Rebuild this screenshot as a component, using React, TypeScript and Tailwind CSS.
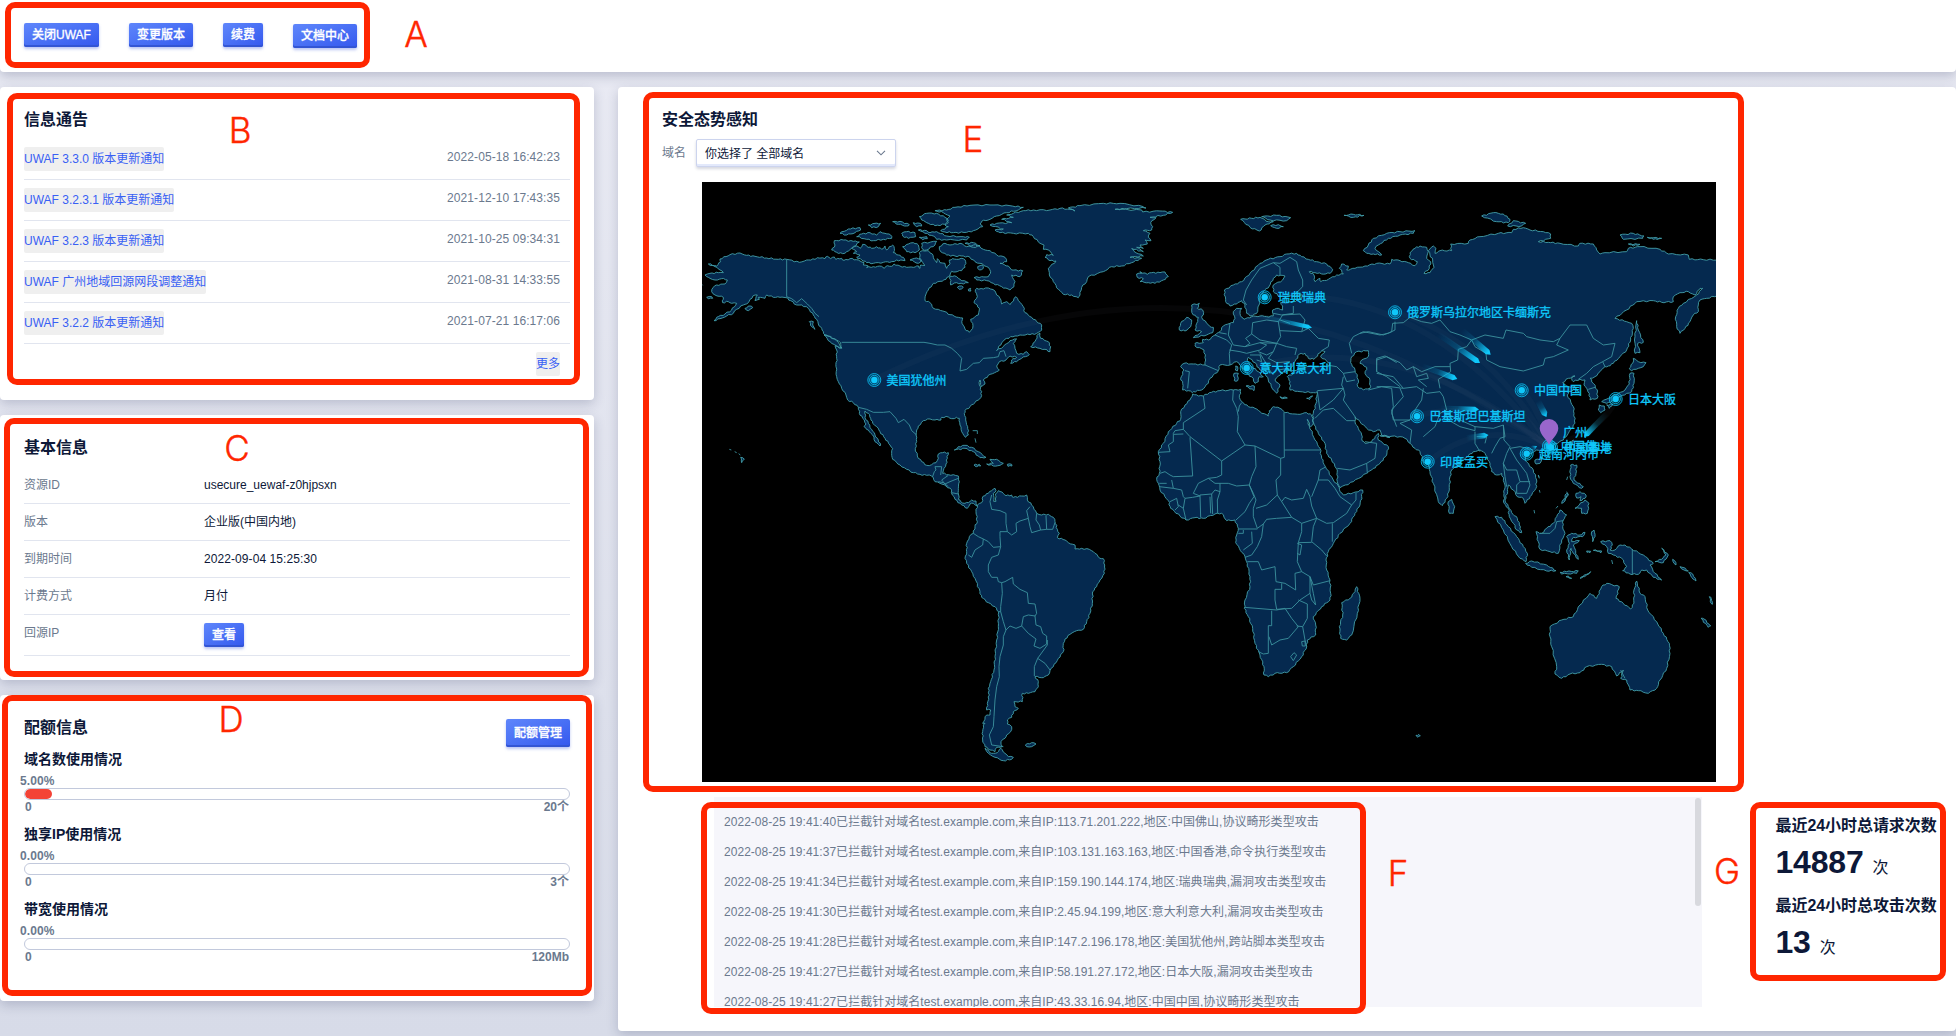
import React from "react";

/* ------------------------------------------------------------------ */
/* World map geometry: one unit is a third of a pixel. Each tile has    */
/* its own origin so that point lists stay short.                       */
/* ------------------------------------------------------------------ */

type Pt = [number, number];
type Tile = "A" | "S" | "E" | "R" | "F" | "O";

const ORIGIN: Record<Tile, Pt> = {
  A: [0, 0],
  S: [660, 780],
  E: [1080, 0],
  R: [1980, 0],
  F: [1260, 600],
  O: [2040, 570],
};

const parse = (tile: Tile, pts: string): Pt[] =>
  pts
    .trim()
    .split(/\s+/)
    .map((p) => {
      const [x, y] = p.split(",").map(Number);
      return [x + ORIGIN[tile][0], y + ORIGIN[tile][1]] as Pt;
    });

const coast = (pts: Pt[]): string => {
  const out: Pt[] = [];
  pts.forEach((p, i) => {
    const q = pts[(i + 1) % pts.length];
    out.push(p);
    const dx = q[0] - p[0];
    const dy = q[1] - p[1];
    const len = Math.hypot(dx, dy);
    const n = Math.min(4, Math.floor(len / 8));
    if (len > 90) return;
    for (let k = 1; k <= n; k++) {
      const t = k / (n + 1);
      const w = Math.sin(p[0] * 12.9 + p[1] * 7.3 + k * 41.7) * 2;
      out.push([p[0] + dx * t - (dy / len) * w, p[1] + dy * t + (dx / len) * w]);
    }
  });
  return "M" + out.map((p) => p[0].toFixed(1) + " " + p[1].toFixed(1)).join("L") + "Z";
};

const line = (pts: Pt[]): string => "M" + pts.map((p) => p.join(" ")).join("L");

const LAND: [Tile, string][][] = [
  // North and Central America
  [
    ["A", "25,252 50,258 62,245 60,237 90,224 120,219 140,226 165,229 200,234 235,238 260,238 298,247 320,240 345,238 352,233 375,236 382,229 392,236 403,231 408,238 425,235 432,241 450,236 475,240 480,243 492,248 490,255 505,258 500,263 520,260 545,259 553,265 562,257 575,259 582,252 600,258 620,262 640,262 656,258 660,265 662,255 675,256 668,247 660,240 658,218 668,212 685,212 697,222 700,232 710,248 712,236 720,248 735,250 740,265 750,250 748,240 757,236 770,238 790,236 797,245 795,262 785,272 765,276 755,274 750,285 738,298 720,304 700,310 685,330 677,345 675,362 690,368 700,385 715,388 735,395 750,404 775,412 788,414 786,430 795,447 808,457 818,445 818,430 812,418 835,405 838,390 832,375 822,368 832,350 826,335 830,325 850,327 865,324 885,333 890,345 900,355 905,372 920,365 930,374 948,350 955,362 970,380 975,398 995,412 1010,425 1025,435 1025,450 1010,460 990,464 960,465 945,468 920,475 905,488 890,512 910,500 930,482 950,477 945,485 940,490 945,505 950,520 970,523 980,515 988,524 965,535 950,545 932,550 935,540 950,532 930,528 918,540 898,545 890,558 898,570 890,575 870,583 862,592 850,600 855,612 845,620 840,600 838,615 845,635 843,652 825,668 810,680 795,692 793,700 797,720 803,740 805,765 797,772 785,755 780,735 778,715 770,712 755,716 745,711 725,712 723,720 705,720 690,717 670,722 655,738 650,750 648,765 650,785 646,805 652,828 665,845 680,856 695,854 708,848 715,835 715,822 728,818 745,818 742,835 738,852 732,865 728,880 745,884 760,884 775,888 778,905 775,925 776,945 775,958 782,965 795,970 805,968 815,960 828,963"],
    ["S", "170,198 160,190 150,192 142,205 125,195 105,178 97,165 95,150 78,138 60,130 45,125 35,108 20,106 0,103"],
    ["A", "640,878 620,868 600,855 578,838 575,820 578,805 570,795 555,775 540,755 530,740 518,730 512,715 505,700 495,693 495,712 505,730 515,748 525,765 535,780 542,795 540,798 525,785 518,765 505,750 492,740 498,732 488,715 478,700 475,682 460,668 443,660 438,645 425,625 415,605 410,590 408,560 410,535 410,510 405,497 425,505 422,488 410,480 375,465 370,455 365,445 355,432 350,418 340,405 325,385 305,375 290,375 272,362 258,353 240,352 220,352 200,345 195,355 175,352 178,358 165,362 172,345 165,345 150,358 145,368 130,375 110,388 100,400 80,408 60,416 42,422 50,412 75,402 95,390 110,370 95,370 85,365 68,368 70,352 45,345 35,335 40,322 50,315 75,312 82,300 65,296 45,300 30,295 15,285 30,280 55,278 70,278 60,270 45,260"],
  ],
  // Canadian Arctic
  [["A", "403,182 430,180 460,184 478,186 455,205 440,215 428,221 410,217 395,210 405,195"]],
  [["A", "455,205 470,198 480,205 488,193 500,198 515,205 530,200 545,208 555,198 560,210 568,200 578,195 583,205 580,218 595,225 610,232 615,242 590,240 575,245 550,247 520,250 500,248 485,240 470,232 480,225 460,220 470,215"]],
  [["A", "420,160 445,147 480,143 482,150 465,158 440,165"]],
  [["A", "470,170 485,162 510,158 530,165 540,155 555,160 572,165 575,175 550,178 520,182 500,178"]],
  [["A", "505,135 525,130 542,130 535,140 515,143"]],
  [["A", "578,125 600,124 628,134 620,138 595,133"]],
  [["A", "640,128 660,130 665,138 650,140"]],
  [["A", "605,160 620,155 645,158 647,170 625,175 608,168"]],
  [["A", "658,172 680,170 682,176 668,179"]],
  [["A", "608,200 625,192 640,188 655,195 658,210 645,218 620,215"]],
  [["A", "665,190 710,184 705,195 680,210 668,208"]],
  [["A", "630,240 650,234 665,240 655,250"]],
  [["A", "655,150 680,152 690,158 710,155 740,168 790,170 808,172 800,180 740,180 710,178 700,168 675,160"]],
  [["A", "705,92 740,90 765,82 810,76 870,75 930,77 970,82 955,90 920,98 890,108 870,118 845,124 840,132 848,140 820,152 800,157 760,158 735,156 722,152 745,140 735,135 745,128 740,118 750,108 730,98"]],
  [["A", "658,110 680,100 710,100 735,112 745,122 735,133 705,137 680,128 665,120"]],
  [["A", "718,200 735,190 750,195 780,190 800,200 820,195 838,198 850,208 870,212 890,225 915,232 920,245 900,250 925,258 935,270 968,272 960,290 935,285 945,305 942,320 930,330 905,320 880,310 860,302 830,300 822,293 845,290 865,290 872,275 865,262 840,250 825,245 810,232 790,228 765,228 740,225 722,215"]],
  [["A", "795,190 820,188 840,197 820,202"]],
  [["A", "750,288 770,290 780,298 805,308 790,312 770,308 752,315"]],
  [["A", "833,260 848,255 850,265 838,270"]],
  [["A", "772,322 785,318 790,322 778,328"]],
  [["A", "805,328 812,325 813,333 806,333"]],
  [["A", "992,500 1005,485 1015,462 1020,460 1022,475 1045,485 1052,500 1050,515 1035,508 1020,505"]],
  [["A", "372,465 385,468 405,478 415,487 425,503 410,498 390,485"]],
  [["A", "328,425 340,425 338,435 345,448 335,440"]],
  [["A", "135,385 150,378 158,383 145,392"]],
  [["A", "20,352 35,350 38,355 25,356"]],
  // Greenland and Iceland
  [
    ["A", "870,135 890,130 935,128 905,118 940,112 920,105 940,100 970,92 1000,90 1050,90 1080,85 1110,88 1125,93"],
    ["E", "25,84 60,77 130,70 180,70 250,80 258,84 200,86 165,88 245,90 248,96 300,93 338,97 310,106 270,112 288,113 272,128 278,140 275,150 250,152 270,160 265,172 273,182 255,180 262,192 240,195 250,205 230,202 250,215 215,206 222,214 250,228 210,232 245,235 215,248 185,258 155,260 130,275 85,290 80,305 65,322 60,345 55,353 35,345 10,343 0,332"],
    ["A", "1075,328 1060,305 1048,285 1045,265 1068,243 1050,242 1035,232 1040,224 1060,226 1045,210 1030,208 1032,195 1020,190 1000,170 985,160 940,160 900,158 885,150 910,147"],
  ],
  [["E", "230,282 245,280 240,275 262,283 275,278 300,278 315,276 325,290 310,300 285,310 265,308 240,305 250,296 232,292"]],
  // Caribbean and Pacific islands
  [["A", "763,810 775,800 795,796 815,802 835,815 858,832 840,833 820,815 795,805"]],
  [["A", "860,852 880,850 870,838 890,838 910,850 900,856 880,858"]],
  [["A", "822,855 838,853 842,858 830,860"]],
  [["A", "922,853 935,853 936,858 924,859"]],
  [["A", "122,832 133,838 125,848"]],
  // South America
  [["S", "172,195 185,188 190,168 205,160 215,152 225,145 228,152 220,160 222,172 221,184 228,184 228,170 226,162 235,152 250,160 258,167 275,165 280,172 305,168 320,165 322,180 340,200 350,220 365,225 385,223 400,232 405,245 412,268 418,280 412,293 435,300 445,308 465,315 465,327 485,325 508,328 525,340 540,355 550,356 554,375 553,400 540,420 530,440 518,455 517,490 510,520 500,545 490,568 470,572 450,583 435,597 430,610 430,635 415,655 400,680 390,692 385,705 370,713 345,710 355,725 355,740 345,755 325,760 307,760 307,785 282,785 285,800 295,805 280,815 275,832 262,840 262,852 275,860 272,875 260,885 255,895 243,905 247,920 230,922 225,935 210,930 195,920 188,900 188,875 190,855 195,850 188,850 200,825 210,825 212,810 200,810 202,790 208,765 205,745 212,725 222,690 225,650 230,600 235,560 236,515 225,500 205,488 185,472 180,455 165,415 155,395 140,370 135,355 140,335 140,310 148,290 160,280 165,260 172,245 168,215"]],
  [["S", "195,925 215,940 232,938 243,925 255,940 265,950 280,952 275,958 250,962 225,952 205,940"]],
  [["S", "316,915 335,908 348,912 335,920 320,920"]],
  // Africa
  [["F", "218,42 235,48 250,48 268,38 300,32 340,30 362,28 362,40 358,52 365,65 385,80 405,85 420,95 445,108 448,92 460,80 480,85 495,98 525,102 540,103 560,98 575,105 580,115 578,135 572,140 562,118 568,138 585,180 600,205 605,235 615,258 640,300 655,318 660,335 670,345 700,338 728,330 725,350 720,375 705,400 690,430 660,460 640,490 625,515 618,540 620,570 630,600 632,640 630,660 605,680 580,710 587,735 587,765 562,780 560,800 545,830 520,860 500,878 465,880 445,890 432,885 432,860 420,825 405,790 398,745 385,710 373,685 375,660 390,620 390,590 382,550 375,530 358,505 347,488 350,465 355,445 345,420 320,422 305,400 285,402 250,415 225,413 198,420 180,408 152,385 145,362 120,330 115,310 110,298 118,280 120,245 115,215 130,190 145,155 170,130 182,118 182,95 195,75 210,60"]],
  [["F", "710,620 720,655 712,700 695,765 680,780 662,775 658,740 668,705 665,668 690,655 705,635"]],
  // Europe and Asia
  [
    ["E", "397,638 385,632 368,630 368,610 362,595 372,570 362,560 372,550 400,552 435,555 437,540 432,510 405,498 405,490 430,488 428,478 445,480 465,465 480,455 490,438 510,430 520,428 525,415 520,395 530,385 545,385 540,400 545,412 552,418 575,410 600,408 620,410 640,408 638,390 655,385 668,390 668,378 662,368 700,365 725,355 728,345 700,348 660,350 640,335 640,315 668,300 675,288 650,285 640,295 628,318 610,335 600,350 597,375 590,400 570,408 560,400 555,375 545,362 530,372 510,378 497,365 493,330 520,315 545,305 570,280 600,250 625,238 660,230 680,222 710,220 725,230 745,238 770,245 800,252 818,268 810,280 785,282 765,278 748,275 762,285 765,305 780,295 782,305 805,298 830,285 850,282 845,270 838,265 845,252 865,258 860,270 885,265 915,258 950,250 990,252 995,238"],
    ["R", "120,242 145,248 165,257 172,245 150,235 150,218 165,205 180,198 200,202 205,215 200,235 212,245 208,265 192,280 210,278 222,262 218,240 210,225 205,212 220,198 228,205 225,220 240,212 275,212 272,192 325,190 330,180 360,170 415,160 455,158 460,148 490,143 510,150 550,155 572,162 572,175 535,185 565,187 600,190 655,198 660,190 700,192 710,210 720,222 735,218 800,215 805,205 840,200 900,208 925,222 985,225 988,238 1030,239 1080,240 1080,345 1040,355 1020,360 1015,375 1015,395 1000,405 990,425 975,445 960,460 950,440 947,410 955,385 970,370 1010,345 1028,325 1020,325 1005,345 985,335 960,338 940,350 940,365 905,367 880,362 830,365 800,390 765,415 800,425 815,430 820,445 812,480 800,510 780,530 760,550 745,558 735,560 720,575 705,590 690,595 700,610 712,630 712,655 690,660 688,640 680,625 672,615 675,600 660,598 640,605 635,595 645,588 625,595 608,608 625,620 645,618 640,630 625,635 622,645 640,680 642,700 645,730 625,760 610,780 580,795 555,805 540,815 530,810 518,818 500,822 495,840 520,870 530,900 528,925 515,945 495,970"],
    ["O", "430,385 412,380 400,360 385,345 383,365 375,390 385,410 395,428 412,445 418,465 425,488 410,480 400,460 388,440 385,415 372,400 372,370 375,345 365,310 350,315 335,305 330,280 315,250 300,240 280,245 255,265 235,285 215,300 210,320 208,360 200,385 187,407 175,395 160,340 150,305 145,285 130,275 120,245 105,235 90,220 75,205 60,200 20,198 0,197"],
    ["E", "990,772 965,765 960,750 940,755 920,745 900,725 885,710 885,725 895,745 905,765 906,782 915,790 935,785 950,765 955,760 955,780 985,800 980,825 960,850 935,870 920,880 880,905 840,923 832,905 832,870 815,840 800,820 795,790 775,760 763,735 758,725 760,700 768,670 770,650 772,635 760,638 720,635 690,630 690,605 682,590 700,580 690,572 665,578 645,600 660,615 650,640 640,630 625,600 615,580 600,570 585,548 565,532 562,542 575,560 595,575 610,590 598,590 595,605 585,610 580,595 560,580 545,560 530,545 510,555 480,555 475,572 450,595 445,610 425,630 400,635"],
  ],
  // British Isles and Mediterranean islands
  [["E", "395,375 418,370 412,385 428,390 430,405 425,412 440,430 450,440 460,442 458,458 440,465 400,473 425,455 405,450 410,430 415,412 400,405 395,390"]],
  [["E", "362,430 380,412 395,420 392,440 375,453 358,450"]],
  [["E", "558,618 583,618 582,632"]],
  [["E", "522,580 535,580 533,602 523,602"]],
  [["E", "527,558 533,560 532,573 526,570"]],
  [["E", "660,650 682,654 668,656"]],
  [["E", "740,655 758,648 748,659"]],
  // Russian Arctic
  [["E", "542,118 575,115 600,112 625,125 640,125 615,135 598,153 570,142"]],
  [["E", "605,110 650,106 692,113 680,122 630,120"]],
  [["E", "632,137 655,134 670,140 650,145"]],
  [["E", "852,106 880,103 912,106 880,112"]],
  [["R", "10,212 25,195 40,175 80,160 120,155 165,152 160,160 120,165 85,175 55,195 45,205 65,225 40,222 20,220"]],
  [["R", "365,108 400,98 430,102 450,118 445,128 410,125"]],
  [["R", "460,122 497,130 485,138 443,138"]],
  [["R", "780,165 820,160 852,168 848,175 790,178"]],
  [["R", "862,172 905,175 880,178"]],
  [["R", "805,192 840,193 820,198"]],
  // East Asian islands
  [["R", "830,422 835,450 850,487 833,490 840,518 825,520 825,470"]],
  [["R", "820,535 835,545 858,548 850,560 835,565 815,572 808,565 818,550"]],
  [["R", "810,580 822,580 822,610 815,635 800,640 780,650 765,660 740,670 725,665 745,655 775,640 795,630 808,612"]],
  [["R", "718,675 733,678 735,690 722,698 715,690"]],
  [["R", "740,675 758,672 748,685"]],
  [["R", "625,790 640,780 632,805"]],
  [["R", "525,840 545,835 540,850 528,852"]],
  // Southern Asia and Oceania
  [["O", "205,395 215,388 224,410 220,430 208,430"]],
  [["O", "345,440 365,442 385,470 410,500 430,530 442,550 438,575 420,565 395,530 370,480"]],
  [["O", "437,580 455,573 500,585 528,602 500,603 455,592"]],
  [["O", "468,485 485,490 500,475 520,460 530,440 540,420 560,435 550,450 548,470 555,490 545,510 535,550 510,545 480,538 475,515"]],
  [["O", "560,500 575,490 600,495 615,487 608,500 580,502 575,515 598,512 580,525 595,568 580,550 573,535 568,570 560,540 568,520"]],
  [["O", "540,607 560,605 595,603 590,610 545,612"]],
  [["O", "558,620 565,618 575,625"]],
  [["O", "600,625 632,605 620,615"]],
  [["O", "635,485 642,480 645,500 638,515"]],
  [["O", "620,543 632,544 630,548 621,547"]],
  [["O", "640,541 665,543 662,549 655,544"]],
  [["O", "662,515 690,512 697,525 690,540 705,540 720,525 735,525 755,537 790,555 820,580 810,585 825,610 845,630 820,622 800,600 785,600 775,613 750,612 728,602 740,590 725,565 700,555 685,550 680,530"]],
  [["O", "845,535 865,555 850,578 825,575 845,568 858,555"]],
  [["O", "878,568 884,572 888,585 882,580"]],
  [["O", "900,590 912,593 925,603 912,600"]],
  [["O", "926,608 938,612 948,633 935,622"]],
  [["O", "988,680 994,686 997,703 991,695"]],
  [["O", "963,745 972,747 992,768 985,772"]],
  [["O", "572,285 590,285 588,310 582,330 610,350 605,355 580,340 570,320"]],
  [["O", "588,370 600,365 618,375 615,385 600,392 603,380 590,384"]],
  [["O", "585,415 615,390 627,400 622,430 605,430 605,415"]],
  [["O", "545,400 560,370 565,372 550,398"]],
  [["O", "510,770 545,750 580,740 600,705 630,670 650,685 665,650 680,640 718,650 708,685 730,700 752,717 762,700 762,660 770,633 780,670 795,680 803,720 830,755 850,790 868,820 870,850 860,895 840,930 830,955 805,970 775,962 750,960 740,930 722,925 730,900 710,918 695,890 665,883 620,890 600,908 570,912 545,925 525,912 530,890 515,830 510,800"]],
  [["O", "108,1096 116,1093 121,1098 113,1102"]],
];

const SEAS: [Tile, string][] = [
  ["E", "690,568 705,545 718,522 735,520 745,535 762,538 785,512 795,515 782,530 810,550 805,560 740,560 700,572"],
  ["E", "875,530 890,515 925,512 925,530 905,540 900,550 920,562 915,580 930,600 930,625 910,630 893,620 895,600 885,570 872,548"],
];

const BORDERS: [Tile, string[]][] = [
  ["A", [
    "260,238 260,350 275,356 290,368 305,356 322,372 335,385 345,400 357,410",
    "425,487 672,487 690,490 712,495 735,495 755,505 772,520 785,535 782,555 780,573 800,568 820,550 838,548 850,535 880,533 895,530 900,515 912,512 918,530",
    "475,682 500,688 520,697 550,697 570,695 588,715 595,728 612,718 628,735 635,752 650,765",
    "697,892 703,875 708,870 705,860 725,860 722,885",
    "745,886 725,900 735,912 750,905 775,895",
    "715,905 730,908 745,920",
    "755,938 775,942",
    "818,752 832,752 832,762",
    "825,775 828,788",
    "88,808 94,810",
    "104,815 110,818",
    "116,821 121,825",
    "4,312 8,316",
  ]],
  ["S", [
    "215,165 210,185 215,208 240,212 258,220 258,250 262,275 240,275 240,290 242,320 220,322 205,305 190,297 175,290 160,280",
    "190,297 188,315 165,330 155,352 145,345",
    "242,320 235,345 215,352 205,375 205,395 215,412 232,412 235,425 245,428",
    "262,275 275,285 290,275 288,250 300,243 325,235 320,212 330,200",
    "325,235 330,260 335,278 362,270",
    "350,220 348,240 358,255 362,270 380,268 398,268 405,248",
    "378,228 380,268",
    "245,428 255,425 278,412 280,432 300,448 322,458 325,490 345,492 350,520 345,528 325,525 310,530 305,558 288,565 270,558 258,570 250,545 242,515 236,515",
    "245,428 247,460 242,500 242,515",
    "305,558 325,580 348,597 342,618 360,625 380,612 380,588 368,580 362,560 348,555 345,528",
    "382,600 382,615 353,655 375,670 390,690",
    "353,655 343,680 343,708",
    "258,570 250,590 250,615 240,650 237,680 238,710 230,740 225,780 222,830 220,860 208,885 215,915 250,920",
  ]],
  ["F", [
    "250,48 255,85 225,105 190,128 190,148 165,152 160,160 160,185 145,195 150,215 115,217",
    "190,162 162,163",
    "190,148 210,170 305,243 375,195 405,198",
    "210,172 218,288 160,290 150,285 135,275 120,280",
    "305,243 305,285 290,292 265,295 235,310 220,340 240,348",
    "340,30 338,60 350,85 355,110 352,155 375,195",
    "355,95 358,78 365,68",
    "405,198 482,235",
    "492,97 493,232 482,235",
    "493,210 600,210",
    "405,198 408,260 395,290 388,315",
    "482,235 482,285 468,300 472,345",
    "300,310 325,310 350,318 388,315 402,350 388,370 375,395 348,420",
    "300,310 300,335 292,360 293,400",
    "265,295 285,310 300,310",
    "240,345 275,342 285,330 300,335",
    "240,345 242,412",
    "275,342 278,402",
    "270,350 272,400",
    "160,325 185,330 190,350 195,355 190,385 198,420",
    "195,355 218,352 240,348",
    "118,320 160,325 155,300",
    "140,310 118,310",
    "150,365 170,355 175,380 165,390",
    "175,375 190,385",
    "388,315 400,340 408,360 400,385 400,410 412,445",
    "355,447 412,447",
    "355,460 370,460 370,450",
    "395,455 397,490 370,510",
    "408,385 440,375 472,345 485,365 515,412 470,415 440,418 430,432 412,445",
    "485,365 495,352 515,360 550,355 560,328 570,350 575,378 590,415 545,430 515,412",
    "575,350 595,300 625,300 645,325 660,350 695,375 680,400 640,428 620,430 590,415",
    "595,300 600,270 615,262",
    "637,430 637,485",
    "695,375 708,360 708,338",
    "590,415 580,440 575,485 605,510 620,528",
    "545,430 545,455 535,488 575,487",
    "430,432 425,470 412,500 395,525 375,532",
    "535,488 532,545 545,575 525,580 527,630 495,610 468,605 465,560 425,570 415,545 382,545",
    "532,490 545,495 540,525 532,520",
    "545,575 570,590 580,615 630,602",
    "570,590 570,640 540,660 515,685 470,688 465,660 465,628 485,628 485,610",
    "570,590 580,640 587,675 575,660 570,640",
    "373,682 470,690 495,685",
    "455,692 455,737 445,737 445,820 430,822 415,815",
    "495,685 515,715 535,740 505,775 480,780 455,795 447,770",
    "535,660 562,672 562,715 548,740 530,738",
    "548,740 555,780 560,800",
    "512,830 522,818 530,825 520,842 512,830",
    "545,785 555,783 556,798 547,798 545,785",
  ]],
  ["E", [
    "560,375 550,360 558,330 575,300 600,265 640,248 660,250",
    "640,248 660,262 660,285",
    "660,250 690,232 710,245 715,270 728,300 728,320 700,348",
    "640,400 665,405 700,400 700,378",
    "660,420 690,430",
    "655,425 668,405 720,402 735,420 725,455 660,452",
    "578,428 620,420 655,425 662,470 650,490 600,480 575,462 557,475 570,490 555,500 520,495 505,465 510,430",
    "575,462 578,428",
    "465,465 500,480 515,495 508,520 510,555",
    "478,458 500,462",
    "508,510 540,515 560,520 600,510 620,495 600,488 555,500",
    "600,488 650,490 640,515 620,525 595,515",
    "650,490 680,500 710,505 705,525",
    "725,455 745,445 775,475 808,480 805,500 785,512",
    "640,515 625,535 650,548 690,545",
    "650,548 655,570 685,565",
    "570,525 600,525 605,545 590,540",
    "600,520 615,545 625,565 640,585",
    "375,572 388,575 383,625",
    "435,555 475,572",
    "850,590 845,615 850,625 772,632",
    "800,555 830,560 850,580 885,575",
    "850,580 860,605 885,600",
    "850,625 855,645 850,660 885,710",
    "772,635 780,690 820,660 850,625",
    "765,715 790,690 820,685 860,722 885,722",
    "832,865 870,870 920,850 945,835 950,790 915,785",
    "920,850 922,880",
    "925,630 965,620 995,625 1000,680 995,700 1010,740",
    "875,520 868,490 880,470 910,455 960,465 985,460 1005,450 1005,425",
    "950,575 950,540 980,530 1010,548",
    "950,575 980,590 1020,620",
  ]],
  ["R", [
    "0,460 25,455 70,465 95,455 98,430 130,428 150,412 185,425 215,430 240,420 270,455 300,465 335,480",
    "335,480 375,465 430,475 438,450 490,460 500,470 540,480 580,485 600,475 590,495 625,510 580,530 555,535 550,555 490,573 420,560 380,540 378,520 345,500 335,480",
    "600,475 630,435 680,435 700,475 730,495 765,490 755,530 728,545 735,560",
    "728,545 700,560 680,580 655,598",
    "335,480 320,500 295,508 293,540 270,550 272,575 235,598 240,625",
    "50,575 50,535 75,528 120,548 140,570 160,560 185,575 225,560 270,560",
    "160,560 170,590 200,580 205,595 175,600 200,620",
    "50,580 100,590 130,625",
    "50,620 90,620 130,625 170,620 200,640 240,635 250,650",
    "120,625 130,650 95,690 100,720 150,720",
    "190,625 185,660 165,690 150,720 120,730 155,750 150,790",
    "250,650 260,690 240,700 225,740 190,770",
    "255,700 265,720 300,740 345,752 345,740 300,720 270,705",
    "345,740 400,745 430,735 435,770 420,775 405,800 395,820",
    "345,755 345,790 360,815",
    "350,770 380,770 375,790",
    "430,735 432,780 450,800 440,820 430,850 440,870 470,870 480,905 510,905",
    "450,805 480,800 520,810",
    "450,805 470,840 500,880 510,915 500,940 470,940 470,915 480,905",
    "430,850 435,890 440,920",
    "685,628 705,622",
    "535,885 538,895",
    "538,930 540,938",
    "620,935 625,945 612,962",
  ]],
  ["O", [
    "480,490 510,490 525,475 530,455 550,452",
    "757,537 757,612",
    "528,415 534,408",
    "695,570 698,582",
    "475,315 477,322",
    "462,420 464,430",
    "563,320 560,330",
    "722,900 728,912 735,925",
  ]],
];

const LAND_D = LAND.map((parts) => coast(parts.flatMap(([t, p]) => parse(t, p)))).join("");
const SEA_D = SEAS.map(([t, p]) => coast(parse(t, p))).join("");
const BORDER_D = BORDERS.flatMap(([t, list]) => list.map((p) => line(parse(t, p)))).join("");

const NODES = [
  { x: 172.3, y: 198, lx: 184.5, label: "美国犹他州" },
  { x: 562.7, y: 115.3, lx: 576, label: "瑞典瑞典" },
  { x: 544.7, y: 186, lx: 557.5, label: "意大利意大利" },
  { x: 693, y: 130.3, lx: 705, label: "俄罗斯乌拉尔地区卡缅斯克" },
  { x: 819.7, y: 208.3, lx: 832, label: "中国中国" },
  { x: 715, y: 234.3, lx: 727.5, label: "巴基斯坦巴基斯坦" },
  { x: 725.7, y: 279.7, lx: 738, label: "印度孟买" },
  { x: 824.7, y: 271.7, lx: 837, label: "越南河内市" },
  { x: 913.7, y: 217, lx: 926, label: "日本大阪" },
  { x: 847, y: 264, lx: 859, label: "中国佛山" },
  { x: 849, y: 265.5, lx: 862, label: "中国香港" },
];

const ARCS = [
  "M172 198Q520 26 847 265",
  "M563 115Q720 100 847 265",
  "M545 186Q700 145 847 265",
  "M693 130Q790 160 847 265",
  "M820 208Q840 232 847 265",
  "M715 234Q780 215 847 265",
  "M726 280Q780 235 847 265",
  "M914 217Q900 250 847 265",
];

/* head x/y, tail x/y, width at the head */
const COMETS = [
  [610, 145.7, 556, 133.5, 4],
  [788.7, 172.7, 760, 148, 5.5],
  [778, 181, 736, 152, 5.5],
  [755.3, 197, 720, 184, 5.5],
  [777, 227.5, 738, 226, 5],
  [844.5, 235, 836, 219, 6],
  [786.5, 253, 764, 256, 5.5],
  [835, 264, 828, 268, 5],
  [882, 255, 905, 231, 5.5],
];

function WorldMap() {
  return (
    <svg
      width="1014"
      height="600"
      viewBox="0 0 1014 600"
      className="block bg-black [font-family:'Liberation_Sans','Noto_Sans_CJK_SC',sans-serif]"
    >
      <g transform="translate(-2 -2) scale(0.33333)" strokeLinejoin="round">
        <path d={LAND_D} fill="#05294f" stroke="#419ba6" strokeWidth="2.8" />
        <path d={SEA_D} fill="#000" stroke="#419ba6" strokeWidth="2.8" />
        <path d={BORDER_D} fill="none" stroke="#3a8f9c" strokeWidth="2.8" />
      </g>
      <g fill="none" stroke="#8a8f98" strokeOpacity="0.045" strokeWidth="6">
        {ARCS.map((d) => (
          <path key={d} d={d} />
        ))}
      </g>
      {COMETS.map(([hx, hy, tx, ty, w], i) => {
        const len = Math.hypot(hx - tx, hy - ty);
        const nx = (-(hy - ty) / len) * (w / 2);
        const ny = ((hx - tx) / len) * (w / 2);
        const bx = hx - ((hx - tx) / len) * 4;
        const by = hy - ((hy - ty) / len) * 4;
        return (
          <g key={i}>
            <linearGradient id={"trail" + i} gradientUnits="userSpaceOnUse" x1={tx} y1={ty} x2={hx} y2={hy}>
              <stop offset="0" stopColor="#0bbdf0" stopOpacity="0" />
              <stop offset="0.45" stopColor="#0bbdf0" stopOpacity="0.2" />
              <stop offset="0.9" stopColor="#0fc8fb" />
            </linearGradient>
            <path
              d={`M${tx - nx} ${ty - ny}L${bx - nx} ${by - ny}L${hx} ${hy}L${bx + nx} ${by + ny}L${tx + nx} ${ty + ny}Z`}
              fill={`url(#trail${i})`}
            />
          </g>
        );
      })}
      {NODES.map((n) => (
        <g key={n.label}>
          <circle cx={n.x} cy={n.y} r="6.5" fill="#0bbdf0" fillOpacity="0.12" stroke="#0bbdf0" strokeOpacity="0.85" strokeWidth="1" />
          <circle cx={n.x} cy={n.y} r="4.7" fill="#0bbdf0" fillOpacity="0.12" stroke="#0bbdf0" strokeOpacity="0.9" strokeWidth="0.9" />
          <circle cx={n.x} cy={n.y} r="3.2" fill="#0fc8fb" />
          <text x={n.lx} y={n.y + 5} fontSize="12" fill="#0fc8fb" stroke="#0fc8fb" strokeWidth="0.3">
            {n.label}
          </text>
        </g>
      ))}
      <text x="861" y="255" fontSize="12" fill="#0fc8fb" stroke="#0fc8fb" strokeWidth="0.3">
        广州
      </text>
      <path d="M847 263C845 258 837.7 252.500 837.7 246.300A9.300 9.300 0 0 1 856.300 246.300C856.300 252.500 849 258 847 263Z" fill="#9966cc" />
    </svg>
  );
}

/* ------------------------------------------------------------------ */

function Btn({ children, className = "h-6" }: { children: React.ReactNode; className?: string }) {
  return (
    <button
      className={`flex items-center rounded-[2px] bg-linear-to-br from-[#5f86fb] to-[#3557ee] px-2 pb-px text-xs font-medium whitespace-nowrap text-white [-webkit-text-stroke:0.3px_white] shadow-[inset_0_-2px_0_0_#3355d4,0_2px_3px_0_rgba(60,90,220,0.35)] ${className}`}
    >
      {children}
    </button>
  );
}

function Card({ children, className = "" }: { children: React.ReactNode; className?: string }) {
  return (
    <section className={`rounded bg-white shadow-[0_4px_12px_0_rgba(40,50,90,0.22)] ${className}`}>{children}</section>
  );
}

const Title = ({ children }: { children: React.ReactNode }) => (
  <h2 className="h-6 text-base leading-[26px] font-bold text-[#0d1838]">{children}</h2>
);

const NOTICES = [
  ["UWAF 3.3.0 版本更新通知", "2022-05-18 16:42:23"],
  ["UWAF 3.2.3.1 版本更新通知", "2021-12-10 17:43:35"],
  ["UWAF 3.2.3 版本更新通知", "2021-10-25 09:34:31"],
  ["UWAF 广州地域回源网段调整通知", "2021-08-31 14:33:55"],
  ["UWAF 3.2.2 版本更新通知", "2021-07-21 16:17:06"],
];

const INFO = [
  ["资源ID", "usecure_uewaf-z0hjpsxn"],
  ["版本", "企业版(中国内地)"],
  ["到期时间", "2022-09-04 15:25:30"],
  ["计费方式", "月付"],
];

const QUOTAS = [
  { name: "域名数使用情况", pct: 5, max: "20个" },
  { name: "独享IP使用情况", pct: 0, max: "3个" },
  { name: "带宽使用情况", pct: 0, max: "120Mb" },
];

const LOGS = [
  "2022-08-25 19:41:40已拦截针对域名test.example.com,来自IP:113.71.201.222,地区:中国佛山,协议畸形类型攻击",
  "2022-08-25 19:41:37已拦截针对域名test.example.com,来自IP:103.131.163.163,地区:中国香港,命令执行类型攻击",
  "2022-08-25 19:41:34已拦截针对域名test.example.com,来自IP:159.190.144.174,地区:瑞典瑞典,漏洞攻击类型攻击",
  "2022-08-25 19:41:30已拦截针对域名test.example.com,来自IP:2.45.94.199,地区:意大利意大利,漏洞攻击类型攻击",
  "2022-08-25 19:41:28已拦截针对域名test.example.com,来自IP:147.2.196.178,地区:美国犹他州,跨站脚本类型攻击",
  "2022-08-25 19:41:27已拦截针对域名test.example.com,来自IP:58.191.27.172,地区:日本大阪,漏洞攻击类型攻击",
  "2022-08-25 19:41:27已拦截针对域名test.example.com,来自IP:43.33.16.94,地区:中国中国,协议畸形类型攻击",
];

const FRAMES = [
  "left-[5px] top-[2px] w-[365px] h-[66px]",
  "left-[7px] top-[93px] w-[573px] h-[292px]",
  "left-[4px] top-[418px] w-[585px] h-[259px]",
  "left-[2px] top-[695px] w-[590px] h-[301px]",
  "left-[643px] top-[92px] w-[1101px] h-[700px]",
  "left-[701px] top-[802px] w-[665px] h-[212px]",
  "left-[1750px] top-[802px] w-[196px] h-[179px]",
];

const LETTERS = [
  ["A", "left-[396px] top-[14px]"],
  ["B", "left-[220px] top-[110px]"],
  ["C", "left-[217px] top-[428px]"],
  ["D", "left-[211px] top-[699px]"],
  ["E", "left-[953px] top-[119px]"],
  ["F", "left-[1378px] top-[853px]"],
  ["G", "left-[1707px] top-[851px]"],
];

export default function App() {
  return (
    <div className="relative h-[1036px] w-[1956px] overflow-hidden bg-linear-to-b from-[#eaebf4] to-[#d7dbe8] text-xs text-[#0d1838] [font-family:'Liberation_Sans','Noto_Sans_CJK_SC',sans-serif]">
      <header className="flex h-[72px] items-start gap-[30px] rounded-b bg-white pt-[23px] pl-6 shadow-[0_4px_12px_0_rgba(40,50,90,0.25)]">
        <Btn>关闭UWAF</Btn>
        <Btn>变更版本</Btn>
        <Btn>续费</Btn>
        <Btn className="mt-px h-6">文档中心</Btn>
      </header>

      <div className="mt-[15px] flex gap-6">
        <div className="flex w-[594px] shrink-0 flex-col gap-[15px]">
          <Card className="h-[313px] pt-5 pr-6 pl-6">
            <Title>信息通告</Title>
            <ul className="mt-2">
              {NOTICES.map(([name, date]) => (
                <li key={name} className="flex h-[41px] items-start justify-between border-b border-[#e1e5ef] pt-2 pr-[10px]">
                  <a className="h-6 rounded-[2px] bg-[#efefef] leading-[25px] text-[#3860f4]">{name}</a>
                  <span className="leading-5 tracking-[0.08px] text-[#6b798e]">{date}</span>
                </li>
              ))}
            </ul>
            <div className="flex justify-end pt-2 pr-[10px]">
              <a className="h-6 rounded-[2px] bg-[#efefef] leading-[25px] text-[#3860f4]">更多</a>
            </div>
          </Card>

          <Card className="h-[265px] px-6 pt-5">
            <Title>基本信息</Title>
            <dl className="mt-2">
              {INFO.map(([k, v]) => (
                <div key={k} className="flex h-[37px] border-b border-[#e1e5ef] leading-[37px]">
                  <dt className="w-[180px] text-[#6b798e]">{k}</dt>
                  <dd className={v.startsWith("2022") ? "tracking-[0.08px]" : ""}>{v}</dd>
                </div>
              ))}
              <div className="flex h-[41px] border-b border-[#e1e5ef] leading-[37px]">
                <dt className="w-[180px] text-[#6b798e]">回源IP</dt>
                <dd className="pt-2">
                  <Btn>查看</Btn>
                </dd>
              </div>
            </dl>
          </Card>

          <Card className="h-[306px] px-6 pt-5">
            <div className="flex h-[33px] items-start justify-between">
              <Title>配额信息</Title>
              <Btn className="mt-1 h-7">配额管理</Btn>
            </div>
            {QUOTAS.map((q) => (
              <div key={q.name} className="h-[75px] font-bold text-[#6b798e]">
                <h3 className="h-[25px] text-sm leading-[22px] text-[#0d1838]">{q.name}</h3>
                <p className="-ml-1 h-[15px] leading-[17px] tracking-[0.1px]">{q.pct.toFixed(2)}%</p>
                <div className="h-3 overflow-hidden rounded-full border border-[#c2c9dc]">
                  <div className="h-full rounded-full bg-[#f44336]" style={{ width: `${q.pct}%` }} />
                </div>
                <div className="flex justify-between px-px leading-[15px]">
                  <span>0</span>
                  <span>{q.max}</span>
                </div>
              </div>
            ))}
          </Card>
        </div>

        <Card className="h-[944px] flex-1 pt-5 pl-11">
          <Title>安全态势感知</Title>
          <div className="mt-2 flex h-7 items-center gap-[10px]">
            <span className="text-[#6b798e]">域名</span>
            <div className="flex h-7 w-[200px] items-center justify-between rounded-[2px] border border-[#ccd4ee] bg-white pr-[9px] pl-2 shadow-[inset_0_-2px_0_0_#e3e9fb,0_2px_3px_0_rgba(50,60,100,0.2)]">
              <span className="pt-0.5">你选择了 全部域名</span>
              <svg width="10" height="6" viewBox="0 0 10 6" fill="none" stroke="#6b798e" strokeWidth="1.100">
                <path d="M1 0.800L5 4.800L9 0.800" />
              </svg>
            </div>
          </div>
          <div className="mt-[15px] ml-10 w-[1014px]">
            <WorldMap />
          </div>
          <div className="mt-[15px] ml-[52px] flex">
            <div className="flex h-[210px] w-[988px] justify-between overflow-hidden bg-[#f6f6fb] pt-px pr-px">
              <ul className="pt-[9px] pl-[10px] tracking-[0.035px] text-[#6b798e]">
                {LOGS.map((l) => (
                  <li key={l} className="h-[30px] leading-[30px] whitespace-nowrap">
                    {l}
                  </li>
                ))}
              </ul>
              <div className="h-[108px] w-[6px] rounded-full bg-[#d8d9de]" />
            </div>
            <div className="ml-[73.500px] pt-[17px] whitespace-nowrap">
              {[
                ["最近24小时总请求次数", "14887"],
                ["最近24小时总攻击次数", "13"],
              ].map(([k, v]) => (
                <div key={k} className="h-20">
                  <p className="h-[22px] text-base leading-[24px] font-bold tracking-[-0.06px]">{k}</p>
                  <p className="pt-1 text-[32px] leading-[44px] font-bold tracking-[-0.2px]">
                    {v}
                    <span className="ml-[9px] text-base font-normal">次</span>
                  </p>
                </div>
              ))}
            </div>
          </div>
        </Card>
      </div>

      {FRAMES.map((f) => (
        <div key={f} className={`pointer-events-none absolute rounded-[10px] border-6 border-[#ff2600] ${f}`} />
      ))}
      {LETTERS.map(([l, pos]) => (
        <span
          key={l}
          className={`pointer-events-none absolute flex h-10 w-10 items-center justify-center text-[35px] leading-none font-light text-[#ff2600] [-webkit-text-stroke:0.4px_#ff2600] [font-family:Inter,sans-serif] ${pos}`}
        >
          {l}
        </span>
      ))}
    </div>
  );
}
